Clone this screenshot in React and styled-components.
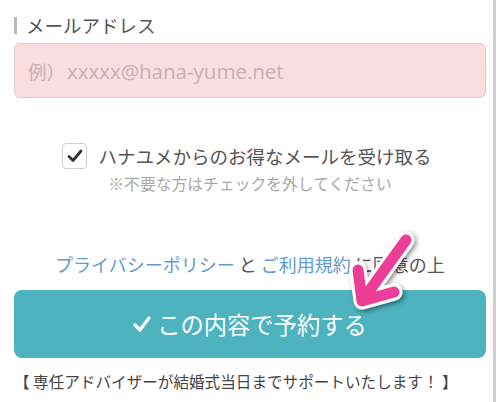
import React from "react";
import styled, { createGlobalStyle } from "styled-components";

const Global = createGlobalStyle`
  html, body { margin: 0; padding: 0; background: #fff; }
  body { font-family: "Noto Sans CJK JP", "Noto Sans", sans-serif; color: #555; }
`;

const Frame = styled.div`
  position: relative;
  width: 493px;
  height: 402px;
  border-right: 3px solid #cfcfcf;
  overflow: hidden;
`;

const Content = styled.div`
  display: flex;
  flex-direction: column;
  padding: 15px 7px 0 14px;
`;

const Label = styled.div`
  display: flex;
  align-items: center;
  gap: 9px;
  height: 20px;
  font-size: 18.5px;
  line-height: 20px;
  color: #555;
  &::before {
    content: "";
    width: 3px;
    height: 17px;
    background: #b9b9b9;
  }
`;

const Input = styled.div`
  margin-top: 8px;
  height: 53px;
  border: 1px solid #e3c9cc;
  border-radius: 6px;
  background: #f9dde1;
  display: flex;
  align-items: center;
  padding-left: 13px;
  font-size: 18.5px;
  color: #c9afb3;
`;

const Latin = styled.span`
  font-family: "Open Sans", "Noto Sans", sans-serif;
  font-size: 20.5px;
  margin-left: 2px;
`;

const CheckRow = styled.div`
  margin-top: 45px;
  display: flex;
  align-items: center;
  justify-content: center;
  gap: 11px;
  height: 26px;
  padding-right: 6px;
`;

const Box = styled.div`
  width: 23px;
  height: 24px;
  border: 1px solid #cfcfcf;
  border-radius: 4px;
  display: flex;
  align-items: center;
  justify-content: center;
  background: #fff;
`;

const CheckText = styled.span`
  font-size: 18.5px;
  line-height: 26px;
  color: #555;
`;

const Note = styled.div`
  margin-top: 5px;
  text-align: center;
  font-size: 15.8px;
  line-height: 20px;
  color: #a8a8a8;
`;

const Agree = styled.div`
  margin-top: 58px;
  text-align: center;
  font-size: 18px;
  line-height: 24px;
  color: #555;
`;

const Link = styled.span`
  color: #5f9bd0;
`;

const Button = styled.div`
  margin-top: 14px;
  height: 68px;
  border-radius: 8px;
  background: #4db3bf;
  color: #fff;
  display: flex;
  align-items: center;
  justify-content: center;
  gap: 6px;
  font-size: 23.3px;
`;

const Footer = styled.div`
  margin-top: 12px;
  font-size: 15.6px;
  line-height: 22px;
  color: #444;
  white-space: nowrap;
`;

const Arrow = styled.svg`
  position: absolute;
  left: 0;
  top: 0;
  pointer-events: none;
`;

export default function App() {
  return (
    <>
      <Global />
      <Frame>
        <Content>
          <Label>メールアドレス</Label>
          <Input>
            例）<Latin>xxxxx@hana-yume.net</Latin>
          </Input>
          <CheckRow>
            <Box>
              <svg width="16" height="14" viewBox="0 0 16 14">
                <path d="M2 7.5 L6 11.5 L14 2" fill="none" stroke="#333" strokeWidth="2.8" strokeLinecap="round" strokeLinejoin="round" />
              </svg>
            </Box>
            <CheckText>ハナユメからのお得なメールを受け取る</CheckText>
          </CheckRow>
          <Note>※不要な方はチェックを外してください</Note>
          <Agree>
            <Link>プライバシーポリシー</Link> と <Link>ご利用規約</Link> に同意の上
          </Agree>
          <Button>
            <svg width="18" height="16" viewBox="0 0 18 16">
              <path d="M2 9 L7 14 L16 2" fill="none" stroke="#fff" strokeWidth="3.2" strokeLinecap="round" strokeLinejoin="round" />
            </svg>
            この内容で予約する
          </Button>
          <Footer>【 専任アドバイザーが結婚式当日までサポートいたします！ 】</Footer>
        </Content>
        <Arrow width="500" height="402" viewBox="0 0 500 402">
          <defs>
            <filter id="sh" x="-50%" y="-50%" width="200%" height="200%">
              <feDropShadow dx="2" dy="2" stdDeviation="2.5" floodColor="#000" floodOpacity="0.45" />
            </filter>
          </defs>
          <g filter="url(#sh)" fill="none" strokeLinecap="round" strokeLinejoin="round">
            <path d="M406 240 L362 301 M358 270 L362 301 L394 292" stroke="#fff" strokeWidth="17" />
            <path d="M406 240 L362 301 M358 270 L362 301 L394 292" stroke="#ee3e97" strokeWidth="11" />
          </g>
        </Arrow>
      </Frame>
    </>
  );
}
